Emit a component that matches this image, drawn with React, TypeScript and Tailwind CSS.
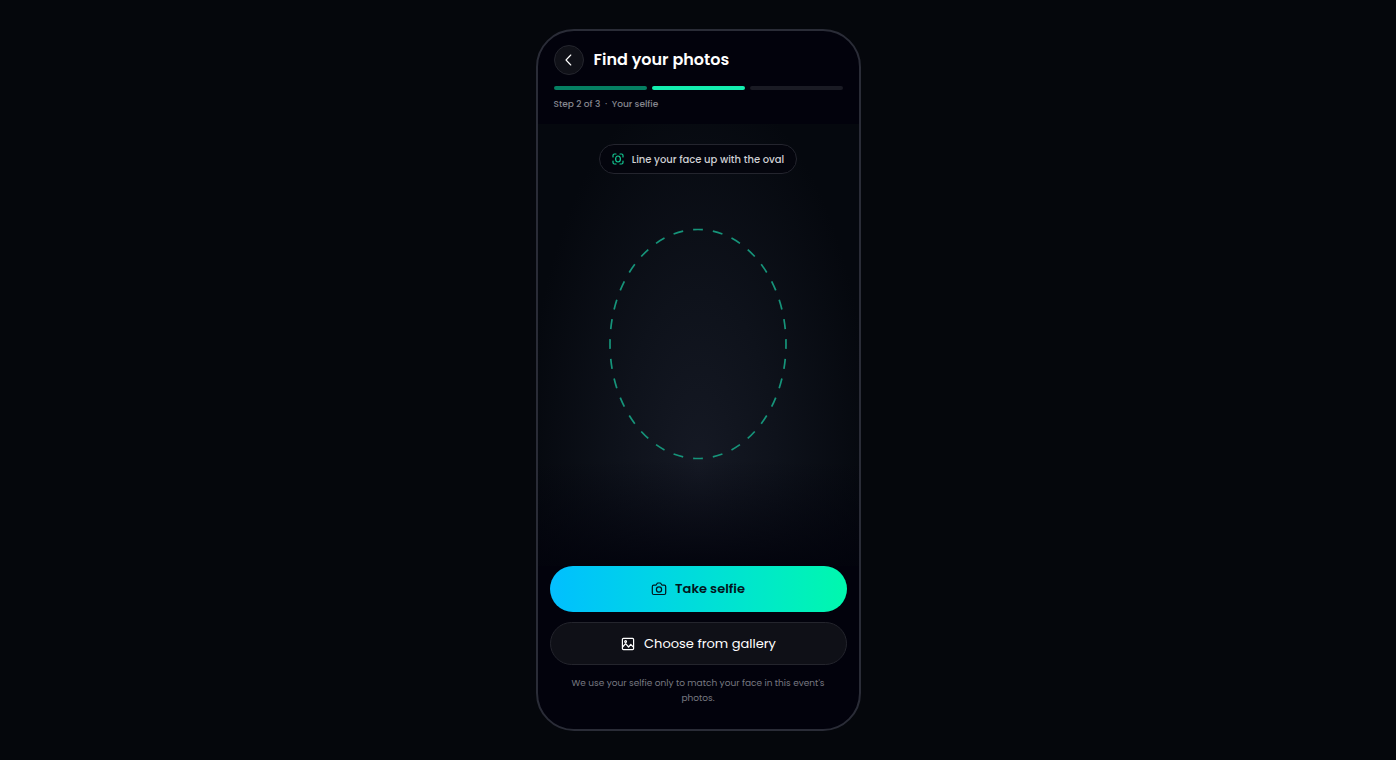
function BackIcon() {
  return (
    <svg className="size-4" viewBox="0 0 16 16" fill="none" stroke="currentColor" strokeWidth="1.1" strokeLinecap="round" strokeLinejoin="round" aria-hidden="true">
      <path d="M9.800 3 5 8l4.800 5" />
    </svg>
  );
}

function FaceScanIcon() {
  return (
    <svg className="size-3 shrink-0 text-[#12c993]" viewBox="0 0 24 24" fill="none" stroke="currentColor" strokeWidth="2.4" strokeLinecap="round" aria-hidden="true">
      <path d="M2 8V5a3 3 0 0 1 3-3h3M16 2h3a3 3 0 0 1 3 3v3M22 16v3a3 3 0 0 1-3 3h-3M8 22H5a3 3 0 0 1-3-3v-3" />
      <ellipse cx="12" cy="12" rx="4.800" ry="6" />
    </svg>
  );
}

function CameraIcon() {
  return (
    <svg className="size-4" viewBox="0 0 16 16" fill="none" stroke="currentColor" strokeWidth="1.2" strokeLinejoin="round" aria-hidden="true">
      <path d="M2.800 4.200h1.700c.6 0 .9-.3 1.100-.8l.2-.5c.2-.6.6-.9 1.200-.9h2c.6 0 1 .3 1.200.9l.2.5c.2.500.5.8 1.100.8h1.700c.9 0 1.500.6 1.500 1.500v6.300c0 .9-.6 1.500-1.500 1.500H2.800c-.9 0-1.500-.6-1.500-1.500V5.700c0-.9.6-1.500 1.500-1.500Z" />
      <circle cx="8" cy="8.500" r="2.600" />
    </svg>
  );
}

function GalleryIcon() {
  return (
    <svg className="size-4" viewBox="0 0 16 16" fill="none" stroke="currentColor" strokeWidth="1.2" strokeLinecap="round" strokeLinejoin="round" aria-hidden="true">
      <rect x="2.400" y="2.400" width="11.200" height="11.200" rx="1" />
      <circle cx="5.600" cy="5.600" r="0.9" />
      <path d="M2.600 11 5.600 7.600l3 3.400 2.200-2.600 2.600 2.800" />
    </svg>
  );
}

export default function App() {
  return (
    <div className="flex min-h-screen items-center justify-center bg-[#05070c] font-['Poppins','Inter',sans-serif] text-white">
      <main className="flex min-h-[702px] w-full max-w-[325px] flex-col overflow-hidden rounded-[38px] border-2 border-[#2a2c37] bg-[#02020c]">
        <header className="px-4 pt-3.5 pb-3">
          <div className="flex items-center gap-2.5">
            <button type="button" aria-label="Back" className="flex size-[30px] items-center justify-center rounded-full border border-[#25262e] bg-[#101118]">
              <BackIcon />
            </button>
            <h1 className="text-base font-semibold">Find your photos</h1>
          </div>
          <div className="mt-[11px] grid grid-cols-3 gap-[5px]">
            <span className="h-1 rounded-full bg-[#057f62]" />
            <span className="h-1 rounded-full bg-[#14eeb0]" />
            <span className="h-1 rounded-full bg-[#1a1b24]" />
          </div>
          <p className="mt-1.5 text-[9px] leading-4 font-medium text-[#85868e]">Step 2 of 3 &nbsp;·&nbsp; Your selfie</p>
        </header>

        <section className="flex flex-1 flex-col items-center bg-[linear-gradient(to_bottom,transparent_76%,#02030ce6_100%),radial-gradient(ellipse_54%_88%_at_50%_78%,#151924_0%,#0e121b_45%,#05080e_100%)] pt-5">
          <div className="flex h-[30px] items-center gap-2 rounded-full border border-[#24252e] bg-[#04050d] px-3 text-[10px] font-medium text-[#cfd0d4]">
            <FaceScanIcon />
            Line your face up with the oval
          </div>
          <svg className="mt-[54px] h-[232px] w-[180px]" viewBox="0 0 180 232" fill="none" aria-hidden="true">
            <ellipse cx="90" cy="116" rx="88" ry="114.500" stroke="#16947a" strokeWidth="1.7" pathLength="64" strokeDasharray="1 1" strokeDashoffset="0.5" />
          </svg>
        </section>

        <footer className="px-3 pb-[23px]">
          <button type="button" className="flex h-[46px] w-full items-center justify-center gap-2 rounded-full bg-linear-to-r from-[#05bfff] to-[#00f8ad] text-[13px] font-semibold text-[#03151c]">
            <CameraIcon />
            Take selfie
          </button>
          <button type="button" className="mt-2.5 flex h-[43px] w-full items-center justify-center gap-2 rounded-full border border-[#24252d] bg-[#0f1017] text-[13px]">
            <GalleryIcon />
            Choose from gallery
          </button>
          <p className="mt-[11px] px-4 text-center text-[9px] leading-[15px] text-[#777881]">We use your selfie only to match your face in this event's photos.</p>
        </footer>
      </main>
    </div>
  );
}
